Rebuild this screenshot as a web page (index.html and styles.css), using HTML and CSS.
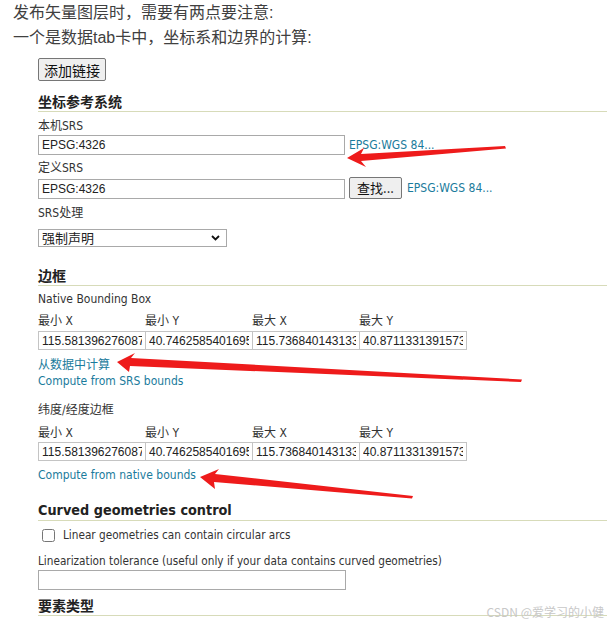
FILE: index.html
```html
<!DOCTYPE html>
<html lang="zh-CN">
<head>
  <meta charset="UTF-8">
  <meta name="viewport" content="width=device-width, initial-scale=1.0">
  <title>发布矢量图层</title>
  <link rel="stylesheet" href="styles.css">
</head>
<body>
  <div class="page">
    <div class="intro">
      <p>发布矢量图层时，需要有两点要注意:</p>
      <p>一个是数据tab卡中，坐标系和边界的计算:</p>
    </div>

    <form class="layer-form">
      <button type="button" class="btn btn-add">添加链接</button>

      <h3 class="section-title">坐标参考系统</h3>
      <label class="field-label label-native" for="nativeSrs">本机SRS</label>
      <div class="srs-row">
        <input type="text" id="nativeSrs" class="srs-input" value="EPSG:4326">
        <a href="#" class="link">EPSG:WGS 84...</a>
      </div>

      <label class="field-label label-declared" for="declaredSrs">定义SRS</label>
      <div class="srs-row srs-row-btn">
        <input type="text" id="declaredSrs" class="srs-input" value="EPSG:4326">
        <button type="button" class="btn btn-find">查找...</button>
        <a href="#" class="link">EPSG:WGS 84...</a>
      </div>

      <label class="field-label label-policy" for="srsPolicy">SRS处理</label>
      <div class="select-wrap">
        <select id="srsPolicy" class="policy-select">
          <option>强制声明</option>
          <option>保留本机</option>
          <option>重投影</option>
        </select>
        <svg class="chevron" width="9" height="6" viewBox="0 0 9 6"><path d="M1 1 L4.5 4.5 L8 1" fill="none" stroke="#111" stroke-width="1.8"/></svg>
      </div>

      <h3 class="section-title title-bbox">边框</h3>
      <div class="field-label label-bbox">Native Bounding Box</div>
      <div class="bbox-labels">
        <span>最小 X</span><span>最小 Y</span><span>最大 X</span><span>最大 Y</span>
      </div>
      <div class="bbox-inputs">
        <input type="text" value="115.581396276087">
        <input type="text" value="40.746258540169539">
        <input type="text" value="115.736840143133">
        <input type="text" value="40.871133139157346">
      </div>
      <a href="#" class="link block-link link-data">从数据中计算</a>
      <a href="#" class="link block-link">Compute from SRS bounds</a>

      <div class="field-label label-latlon">纬度/经度边框</div>
      <div class="bbox-labels bbox-labels-2">
        <span>最小 X</span><span>最小 Y</span><span>最大 X</span><span>最大 Y</span>
      </div>
      <div class="bbox-inputs bbox-inputs-2">
        <input type="text" value="115.581396276087">
        <input type="text" value="40.746258540169539">
        <input type="text" value="115.736840143133">
        <input type="text" value="40.871133139157346">
      </div>
      <a href="#" class="link block-link link-native">Compute from native bounds</a>

      <h3 class="section-title title-curved">Curved geometries control</h3>
      <label class="check-row">
        <input type="checkbox" class="check">
        <span>Linear geometries can contain circular arcs</span>
      </label>
      <label class="field-label label-tolerance" for="tolerance">Linearization tolerance (useful only if your data contains curved geometries)</label>
      <input type="text" id="tolerance" class="tolerance-input">

      <h3 class="section-title title-feature">要素类型</h3>
    </form>

    <!-- red annotation arrows drawn over the screenshot -->
    <svg class="arrows" width="607" height="623" viewBox="0 0 607 623">
      <polygon points="347,158 364,148 361,154 505,146 506,148.5 361,161 366,167" fill="#ee1b1b"/>
      <polygon points="117,362 135,353 131,358 522,379.5 521,382 130,366 129,372" fill="#ee1b1b"/>
      <polygon points="200,477 219,469 215,474 413,496 412,498.5 214,482 215,489" fill="#ee1b1b"/>
    </svg>

    <div class="watermark">CSDN @爱学习的小健</div>
  </div>
</body>
</html>
```

FILE: styles.css
```css
* {
  box-sizing: border-box;
  margin: 0;
  padding: 0;
}

body {
  background: #fff;
  color: #333;
  font-family: "DejaVu Sans Condensed", "DejaVu Sans", "Noto Sans CJK SC", sans-serif;
  font-size: 12px;
}

.page {
  position: relative;
  width: 607px;
  height: 623px;
  overflow: hidden;
}

.intro {
  padding-left: 13px;
  font-family: "Liberation Sans", "Noto Sans CJK SC", sans-serif;
  font-size: 16px;
  line-height: 25px;
  color: #404040;
}

.layer-form {
  margin-left: 38px;
}

.btn {
  font-family: "Noto Sans CJK SC", sans-serif;
  font-size: 14px;
  line-height: 18px;
  color: #111;
  background: #efefef;
  border: 1px solid #767676;
  border-radius: 2px;
  padding: 0 5px;
  white-space: nowrap;
}

.btn-add {
  display: block;
  margin-top: 8px;
  height: 23px;
}

.section-title {
  font-family: "DejaVu Sans Condensed", "DejaVu Sans", "Noto Sans CJK SC", sans-serif;
  font-size: 14px;
  font-weight: bold;
  line-height: 18px;
  color: #222;
  border-bottom: 1px solid #d7dbb9;
  margin-top: 12px;
}

.field-label {
  display: block;
  line-height: 16px;
  color: #333;
}

.label-native { margin-top: 6px; }
.label-declared { margin-top: 5px; }
.label-policy { margin-top: 6px; }

.srs-row {
  display: flex;
  align-items: center;
  margin-top: 1px;
}

.srs-row-btn {
  align-items: flex-end;
  height: 22px;
}

.srs-input {
  width: 307px;
  height: 20px;
  border: 1px solid #a9a9a9;
  font-family: "Liberation Sans", sans-serif;
  font-size: 12px;
  color: #222;
  padding: 0 3px;
  outline: none;
}

.srs-row .link {
  margin-left: 4px;
}

.btn-find {
  height: 22px;
  width: 53px;
  margin-left: 4px;
  padding: 0 4px;
  font-size: 13px;
}

.srs-row-btn .link {
  align-self: center;
  margin-left: 5px;
}

.link {
  color: #1a7b9c;
  text-decoration: none;
  line-height: 16px;
}

.block-link {
  display: block;
  width: max-content;
}

.select-wrap {
  position: relative;
  width: 189px;
  height: 18px;
  margin-top: 8px;
}

.policy-select {
  appearance: none;
  width: 100%;
  height: 18px;
  border: 1px solid #a9a9a9;
  border-radius: 0;
  background: #fff;
  font-family: "Noto Sans CJK SC", sans-serif;
  font-size: 13px;
  line-height: 16px;
  color: #222;
  padding: 0 3px;
}

.chevron {
  position: absolute;
  right: 7px;
  top: 6px;
  pointer-events: none;
}

.title-bbox { margin-top: 20px; }
.label-bbox { margin-top: 5px; }

.bbox-labels {
  display: flex;
  margin-top: 6px;
  line-height: 16px;
}

.bbox-labels span {
  width: 107px;
}

.bbox-inputs {
  display: flex;
  margin-top: 2px;
}

.bbox-inputs input {
  width: 108px;
  height: 19px;
  margin-right: -1px;
  border: 1px solid #c4c4c4;
  font-family: "Liberation Sans", sans-serif;
  font-size: 12px;
  color: #222;
  padding: 0 3px;
  outline: none;
}

.link-data { margin-top: 7px; }

.label-latlon { margin-top: 13px; }
.bbox-labels-2 { margin-top: 7px; }
.bbox-inputs-2 { margin-top: 1px; }
.link-native { margin-top: 6px; }

.title-curved {
  margin-top: 17px;
  font-size: 14.3px;
  line-height: 20px;
}

.check-row {
  display: flex;
  align-items: center;
  margin-top: 6px;
  line-height: 16px;
  font-size: 11.7px;
}

.check {
  width: 13px;
  height: 13px;
  margin: 0 8px 0 4px;
}

.label-tolerance {
  margin-top: 10px;
  font-size: 11.7px;
}

.tolerance-input {
  display: block;
  width: 308px;
  height: 20px;
  margin-top: 1px;
  border: 1px solid #a9a9a9;
  outline: none;
}

.title-feature { margin-top: 7px; }

.arrows {
  position: absolute;
  left: 0;
  top: 0;
  pointer-events: none;
}

.watermark {
  position: absolute;
  right: 3px;
  top: 604px;
  font-family: "Noto Sans CJK SC", sans-serif;
  font-size: 12px;
  line-height: 16px;
  color: #c8c8c8;
}
```
